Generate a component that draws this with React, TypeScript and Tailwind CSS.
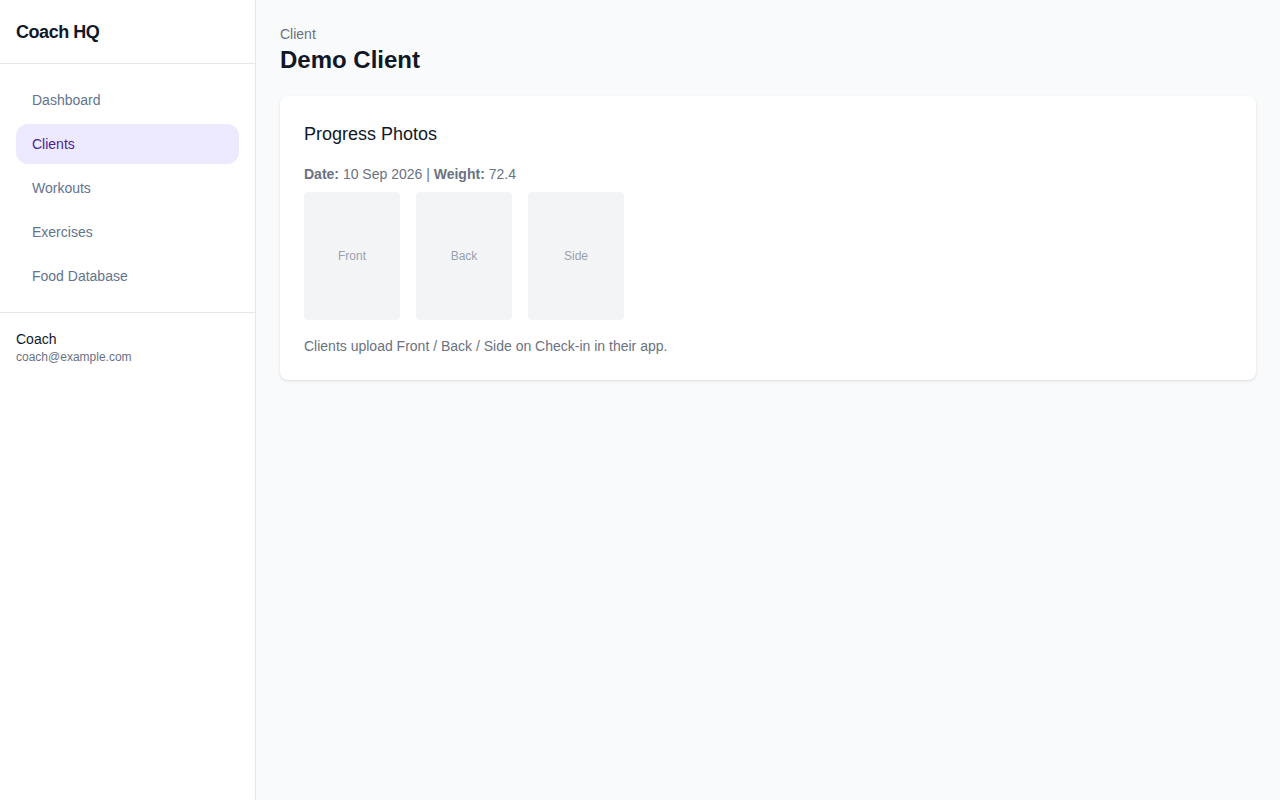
import React from "react";

const navItems = ["Dashboard", "Clients", "Workouts", "Exercises", "Food Database"];

function Sidebar() {
  return (
    <aside className="w-64 shrink-0 bg-white border-r border-gray-200 flex flex-col">
      <div className="h-16 flex items-center px-4 border-b border-gray-200">
        <span className="text-lg font-bold tracking-tight text-gray-900">Coach HQ</span>
      </div>
      <nav className="p-4 flex flex-col gap-1 border-b border-gray-200">
        {navItems.map((item) => {
          const active = item === "Clients";
          return (
            <a
              key={item}
              href="#"
              className={
                active
                  ? "h-10 flex items-center px-4 rounded-xl bg-violet-100 text-[#4c1d95] text-sm"
                  : "h-10 flex items-center px-4 rounded-xl text-slate-500 text-sm"
              }
            >
              {item}
            </a>
          );
        })}
      </nav>
      <div className="p-4">
        <div className="text-sm text-gray-900">Coach</div>
        <div className="text-xs text-gray-500">coach@example.com</div>
      </div>
    </aside>
  );
}

function PhotoSlot({ label }: { label: string }) {
  return (
    <div className="w-24 h-32 rounded bg-gray-100 flex items-center justify-center text-xs text-gray-400">
      {label}
    </div>
  );
}

export default function App() {
  return (
    <div
      className="flex min-h-[800px] bg-gray-50"
      style={{ fontFamily: '"Liberation Sans", Arial, sans-serif' }}
    >
      <Sidebar />
      <main className="flex-1 p-6">
        <div className="text-sm text-gray-500">Client</div>
        <h1 className="text-2xl font-bold text-gray-900">Demo Client</h1>
        <section className="mt-5 bg-white rounded-lg shadow-sm p-6">
          <h2 className="text-lg text-gray-900">Progress Photos</h2>
          <p className="mt-4 text-sm text-gray-500">
            <b className="font-bold">Date:</b> 10 Sep 2026 | <b className="font-bold">Weight:</b> 72.4
          </p>
          <div className="mt-2 flex gap-4">
            <PhotoSlot label="Front" />
            <PhotoSlot label="Back" />
            <PhotoSlot label="Side" />
          </div>
          <p className="mt-4 text-sm text-gray-500">
            Clients upload Front / Back / Side on Check-in in their app.
          </p>
        </section>
      </main>
    </div>
  );
}
